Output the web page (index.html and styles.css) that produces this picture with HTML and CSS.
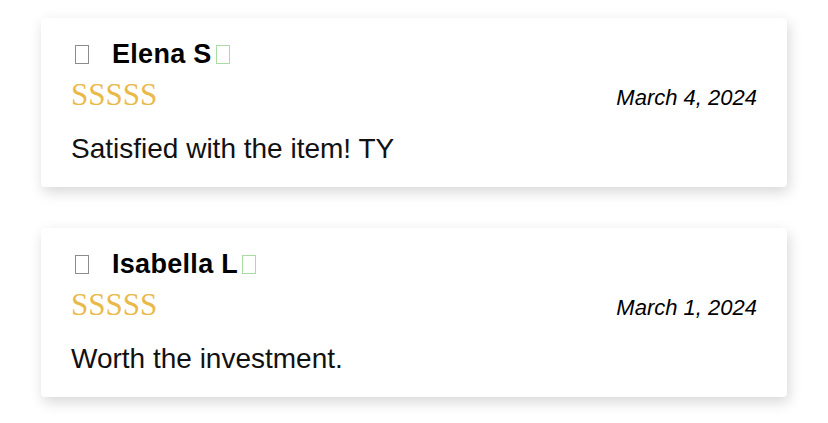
FILE: index.html
```html
<!DOCTYPE HTML>
<html lang="en">
<head>
    <meta charset="UTF-8">
    <title>Reviews</title>
    <link rel="stylesheet" href="styles.css">
</head>
<body>

<div class="reviews">

    <div class="review">
        <div class="review-head">
            <span class="icon user"></span>
            <span class="name">Elena S</span><span class="icon verified"></span>
        </div>
        <div class="review-meta">
            <span class="stars">SSSSS</span>
            <span class="date">March 4, 2024</span>
        </div>
        <p class="text">Satisfied with the item! TY</p>
    </div>

    <div class="review">
        <div class="review-head">
            <span class="icon user"></span>
            <span class="name">Isabella L</span><span class="icon verified"></span>
        </div>
        <div class="review-meta">
            <span class="stars">SSSSS</span>
            <span class="date">March 1, 2024</span>
        </div>
        <p class="text">Worth the investment.</p>
    </div>

</div>

</body>
</html>
```

FILE: styles.css
```css
body { margin: 0; background: #fff; font-family: 'Liberation Sans', Arial, sans-serif; color: #000; }

.reviews { display: flex; flex-direction: column; gap: 41px; padding: 18px 41px; }

.review { background: #fff; border-radius: 4px; padding: 20px 30px 22px; box-shadow: 2px 5px 14px rgba(0,0,0,0.16); }

.review-head { display: flex; align-items: center; height: 32px; }
.name { font-size: 27px; font-weight: bold; line-height: 32px; letter-spacing: 0.3px; }

.icon          { display: inline-block; box-sizing: border-box; width: 14px; height: 19px; }
.icon.user     { border: 1px solid #8c8c8c; margin: 0 23px 0 4px; }
.icon.verified { border: 1px solid #a9dca3; margin-left: 4px; }

.review-meta { display: flex; justify-content: space-between; align-items: baseline; margin-top: 7px; }
.stars { font-family: 'Liberation Serif', serif; font-size: 31px; line-height: 36px; color: #e9b94a; }
.date  { font-size: 22px; font-style: italic; }

.text { margin: 20px 0 0; font-size: 28px; line-height: 32px; color: #111; }
```
